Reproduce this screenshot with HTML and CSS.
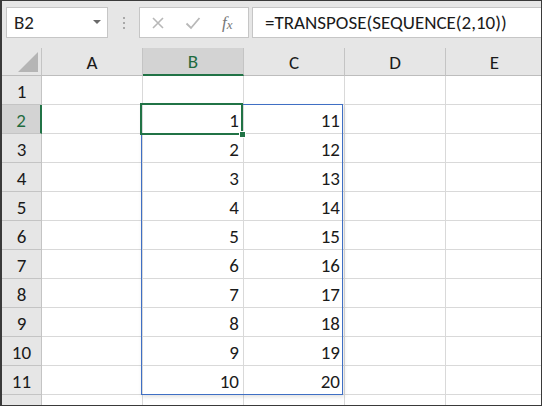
FILE: index.html
```html
<!DOCTYPE html>
<html>
<head>
<meta charset="utf-8">
<link rel="stylesheet" href="styles.css">
</head>
<body>
<div class="frame">
  <div class="toolbar">
    <div class="namebox">
      <span class="name">B2</span>
      <span class="caret"></span>
    </div>
    <div class="dots"><i></i><i></i><i></i></div>
    <div class="buttons">
      <span class="btn x">
        <svg width="14" height="14" viewBox="0 0 14 14"><path d="M2 2L12 12M12 2L2 12" stroke="#b8b8b8" stroke-width="1.6" fill="none"/></svg>
      </span>
      <span class="btn check">
        <svg width="16" height="14" viewBox="0 0 16 14"><path d="M1.5 7.5L6 12L14.5 2" stroke="#b8b8b8" stroke-width="1.8" fill="none"/></svg>
      </span>
      <span class="btn fx">f<span class="sx">x</span></span>
    </div>
    <div class="formula">=TRANSPOSE(SEQUENCE(2,10))</div>
  </div>
  <div class="sheet">
    <div class="grid">
      <div class="hd corner"><span class="tri"></span></div>
      <div class="hd col">A</div>
      <div class="hd col sel">B</div>
      <div class="hd col">C</div>
      <div class="hd col">D</div>
      <div class="hd col last">E</div>

      <div class="hd row">1</div><div class="c"></div><div class="c"></div><div class="c"></div><div class="c"></div><div class="c last"></div>
      <div class="hd row sel">2</div><div class="c"></div><div class="c n">1</div><div class="c n">11</div><div class="c"></div><div class="c last"></div>
      <div class="hd row">3</div><div class="c"></div><div class="c n">2</div><div class="c n">12</div><div class="c"></div><div class="c last"></div>
      <div class="hd row">4</div><div class="c"></div><div class="c n">3</div><div class="c n">13</div><div class="c"></div><div class="c last"></div>
      <div class="hd row">5</div><div class="c"></div><div class="c n">4</div><div class="c n">14</div><div class="c"></div><div class="c last"></div>
      <div class="hd row">6</div><div class="c"></div><div class="c n">5</div><div class="c n">15</div><div class="c"></div><div class="c last"></div>
      <div class="hd row">7</div><div class="c"></div><div class="c n">6</div><div class="c n">16</div><div class="c"></div><div class="c last"></div>
      <div class="hd row">8</div><div class="c"></div><div class="c n">7</div><div class="c n">17</div><div class="c"></div><div class="c last"></div>
      <div class="hd row">9</div><div class="c"></div><div class="c n">8</div><div class="c n">18</div><div class="c"></div><div class="c last"></div>
      <div class="hd row">10</div><div class="c"></div><div class="c n">9</div><div class="c n">19</div><div class="c"></div><div class="c last"></div>
      <div class="hd row">11</div><div class="c"></div><div class="c n">10</div><div class="c n">20</div><div class="c"></div><div class="c last"></div>
      <div class="hd row">12</div><div class="c"></div><div class="c"></div><div class="c"></div><div class="c"></div><div class="c last"></div>
    </div>
    <div class="spill"></div>
    <div class="active"><span class="handle"></span></div>
  </div>
</div>
</body>
</html>
```

FILE: styles.css
```css
* { box-sizing: border-box; }
html, body { margin: 0; padding: 0; background: #ffffff; }
body { font-family: "Carlito", "Lato", "Liberation Sans", sans-serif; color: #1a1a1a; }

.frame {
  width: 542px;
  height: 406px;
  border: 1px solid #3a3a3a;
  border-left-width: 2px;
  background: #ffffff;
  overflow: hidden;
  display: flex;
  flex-direction: column;
}

.toolbar {
  height: 47px;
  flex: none;
  background: #e6e6e6;
  display: flex;
  align-items: flex-start;
  padding: 6px 0 0 4px;
}

.namebox {
  width: 102px;
  height: 31px;
  background: #fff;
  border: 1px solid #c6c6c6;
  display: flex;
  align-items: center;
  justify-content: space-between;
  padding: 0 6px 0 7px;
}
.name { font-size: 19px; color: #222; }
.caret {
  width: 0; height: 0;
  border-left: 4px solid transparent;
  border-right: 4px solid transparent;
  border-top: 4px solid #6a6a6a;
  margin-top: -2px;
}

.dots {
  width: 31px;
  height: 31px;
  display: flex;
  flex-direction: column;
  align-items: center;
  justify-content: center;
  gap: 3px;
}
.dots i { display: block; width: 2px; height: 2px; background: #a8a8a8; }

.buttons {
  width: 110px;
  height: 31px;
  background: #fff;
  border: 1px solid #c6c6c6;
  display: flex;
  align-items: center;
  padding-left: 11px;
}
.btn { display: flex; align-items: center; justify-content: center; }
.btn.x { width: 14px; }
.btn.check { width: 16px; margin-left: 20px; }
.btn.fx {
  margin-left: 21px;
  font-family: "Liberation Serif", serif;
  font-style: italic;
  font-size: 17px;
  color: #777;
  align-items: baseline;
}
.btn.fx .sx { font-size: 13px; position: relative; top: 1px; }

.formula {
  margin-left: 3px;
  flex: 1;
  height: 31px;
  background: #fff;
  border: 1px solid #c6c6c6;
  border-right: none;
  padding-left: 12px;
  font-size: 19px;
  line-height: 29px;
  color: #1a1a1a;
  white-space: nowrap;
}

.sheet { position: relative; flex: 1; overflow: hidden; }

.grid {
  display: grid;
  grid-template-columns: 40px repeat(4, 101px) 97px;
  grid-template-rows: 28px repeat(12, 29px);
}

.hd {
  background: #e6e6e6;
  border-right: 1px solid #c4c4c4;
  border-bottom: 1px solid #bdbdbd;
  display: flex;
  align-items: center;
  justify-content: center;
  font-size: 19px;
  color: #1a1a1a;
}
.hd.col { padding-top: 1px; }
.hd.col.last { border-right: none; }
.hd.col.sel {
  background: #d3d3d3;
  color: #1f6b3f;
  border-bottom: 2px solid #217346;
}
.hd.row { padding-top: 2px; border-bottom-color: #c4c4c4; }
.hd.row.sel {
  background: #d3d3d3;
  color: #1f6b3f;
  border-right: 2px solid #217346;
}

.corner { position: relative; }
.tri {
  position: absolute;
  right: 3px;
  bottom: 3px;
  width: 0; height: 0;
  border-left: 20px solid transparent;
  border-bottom: 20px solid #b5b5b5;
}

.c {
  border-right: 1px solid #d9d9d9;
  border-bottom: 1px solid #d9d9d9;
  font-size: 19px;
  line-height: 28px;
  padding-top: 2px;
}
.c.last { border-right: none; }
.c.n { text-align: right; padding-right: 4px; }

.spill {
  position: absolute;
  left: 139px;
  top: 56px;
  width: 202px;
  height: 291px;
  border: 1px solid #3f6fc4;
  box-shadow: 1px 2px 4px rgba(0,0,0,0.12);
  pointer-events: none;
}

.active {
  position: absolute;
  left: 138px;
  top: 55px;
  width: 103px;
  height: 32px;
  border: 2px solid #217346;
}
.handle {
  position: absolute;
  right: -5px;
  bottom: -5px;
  width: 7px;
  height: 7px;
  background: #217346;
  border: 1px solid #fff;
}
```
